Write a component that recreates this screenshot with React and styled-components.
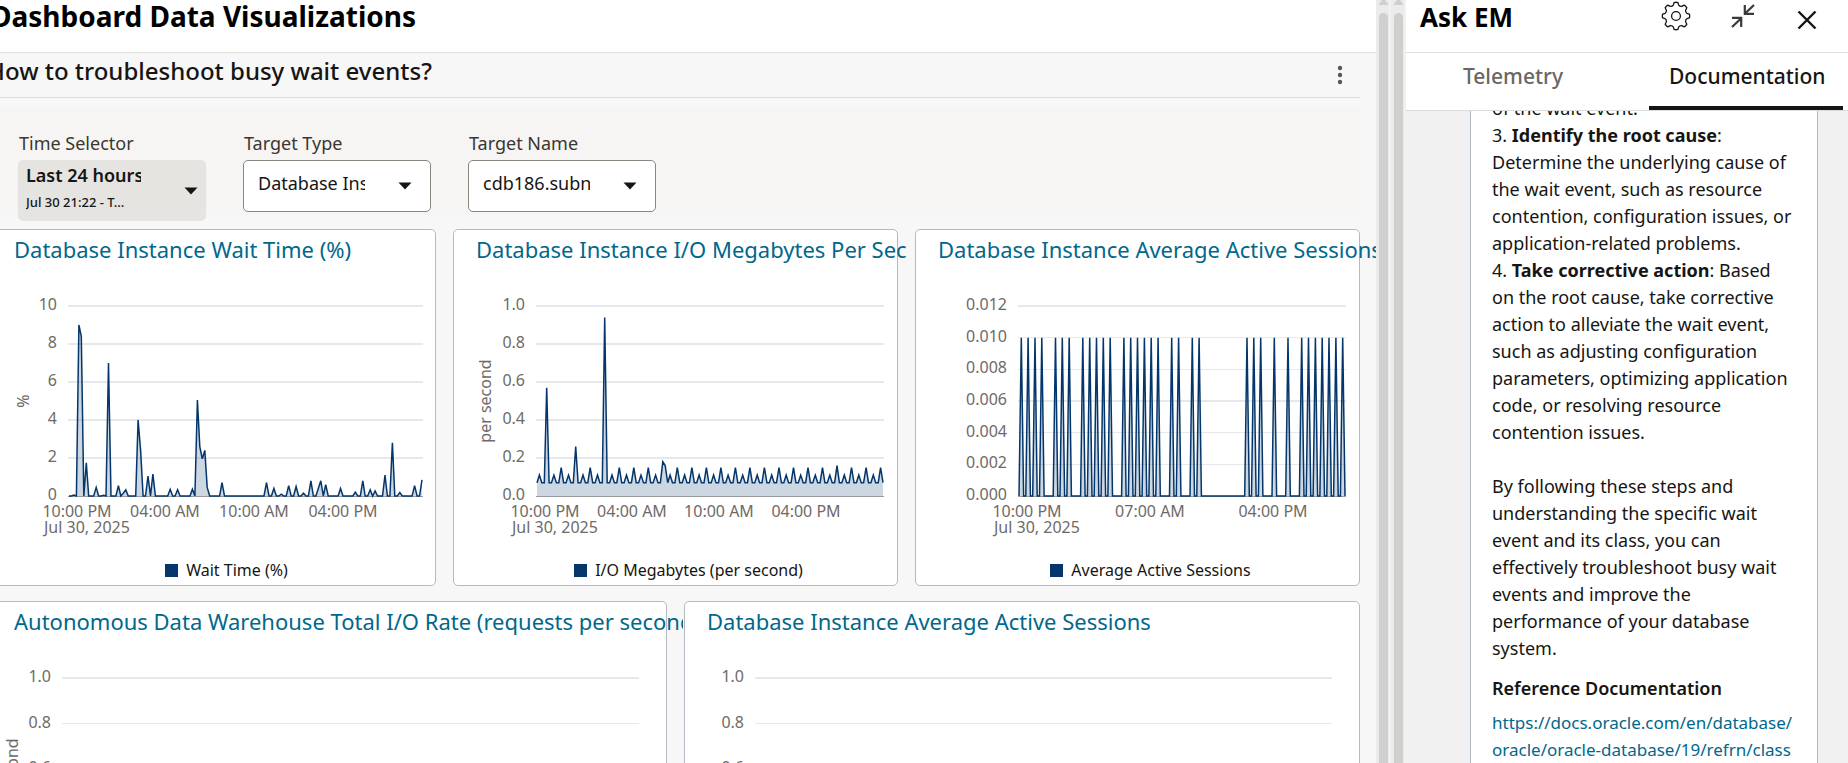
import React from 'react';
import styled, { createGlobalStyle, css } from 'styled-components';

const GlobalStyle = createGlobalStyle`
  *, *::before, *::after { box-sizing: border-box; }
  body {
    margin: 0;
    font-family: "Noto Sans", "Open Sans", sans-serif;
    font-size: 18px;
    line-height: 27px;
    color: #161513;
    overflow: hidden;
  }
  h1, h2, h3, p { margin: 0; }
  button, select { font: inherit; color: inherit; }
`;

/* ---------- page frame ---------- */

const Shell = styled.div`
  display: grid;
  grid-template-columns: minmax(0, 1fr) 30px 442px;
  height: 100vh;
  overflow: hidden;
`;

const Main = styled.main`
  background: #f7f7f7;
  overflow: hidden;
`;

const PageHeader = styled.header`
  height: 53px;
  background: #fff;
  border-bottom: 1px solid #e0e0e0;
  overflow: hidden;
`;

const PageTitle = styled.h1`
  margin-left: -9px;
  font-size: 28px;
  line-height: 32px;
  font-weight: 700;
  color: #000;
  white-space: nowrap;
`;

/* The dashboard is scrolled a little to the right, so its left edge is cut. */
const Dashboard = styled.div`
  margin: 0 16px 0 -9px;
`;

const DashboardHeader = styled.div`
  display: flex;
  align-items: center;
  justify-content: space-between;
  height: 45px;
  margin-left: -4px;
  padding-right: 15px;
  border-bottom: 1px solid #dcdcdc;
`;

const DashboardTitle = styled.h2`
  padding-bottom: 8px;
  font-size: 24px;
  line-height: 32px;
  font-weight: 500;
  white-space: nowrap;
`;

const MenuButton = styled.button`
  display: flex;
  padding: 0;
  border: 0;
  background: none;
`;

/* ---------- filters ---------- */

const FilterBar = styled.div`
  display: flex;
  gap: 37px;
  height: 108px;
  margin: 9px 0 14px;
  padding: 23px 0 0 27px;
  background: #f6f5f3;
`;

const Field = styled.div`
  display: flex;
  flex-direction: column;
  width: 188px;
`;

const FieldLabel = styled.label`
  flex: none;
  height: 30px;
  padding-left: 1px;
  color: #3a3632;
`;

const Control = styled.div`
  position: relative;
  display: flex;
  flex: none;
  svg {
    position: absolute;
    right: ${(p) => (p.$tight ? 8 : 19)}px;
    top: ${(p) => (p.$tight ? 27 : 22)}px;
    pointer-events: none;
  }
`;

const Select = styled.select`
  appearance: none;
  width: 100%;
  height: 52px;
  padding: 0 65px 6px 14px;
  border: 1px solid #8b8580;
  border-radius: 5px;
  background: #fff;
  text-overflow: clip;
`;

const TimeButton = styled.button`
  width: 100%;
  height: 61px;
  padding: 0 65px 4px 8px;
  border: 0;
  border-radius: 5px;
  background: #e5e4e1;
  text-align: left;
`;

const TimeRange = styled.span`
  display: block;
  overflow: hidden;
  white-space: nowrap;
  font-weight: 600;
`;

const TimeDetail = styled.span`
  display: block;
  overflow: hidden;
  white-space: nowrap;
  font-size: 13px;
  font-weight: 500;
`;

/* ---------- chart cards ---------- */

const CardRow = styled.div`
  display: grid;
  grid-template-columns: repeat(${(p) => p.$columns}, minmax(0, 1fr));
  gap: 17px;
  margin-bottom: 15px;
`;

const Card = styled.section`
  height: 357px;
  border: 1px solid #b4bac2;
  border-radius: 5px;
  background: #fff;
`;

const CardTitle = styled.h3`
  height: 49px;
  margin-right: -17px;
  padding: 3px 0 0 22px;
  overflow: hidden;
  font-size: 22px;
  line-height: 32px;
  font-weight: 400;
  color: #00688c;
  white-space: nowrap;
`;

const ChartSvg = styled.svg`
  display: block;
  width: 100%;
  height: auto;
  font-size: 16px;
  fill: #6f6a66;
`;

const Legend = styled.div`
  display: flex;
  align-items: center;
  justify-content: center;
  gap: 8px;
  padding-left: 26px;
  font-size: 16px;
  line-height: 24px;
`;

const Swatch = styled.span`
  width: 13px;
  height: 13px;
  background: #04366b;
`;

/* ---------- scrollbars ---------- */

const Scrollbars = styled.div`
  display: grid;
  grid-template-columns: 1fr 1fr;
  background: #efefef;
`;

const Track = styled.div`
  display: flex;
  flex-direction: column;
  align-items: center;
  gap: 8px;
  padding: 0 3px;
  background: linear-gradient(to right, #ebebeb 13px, #f1f1f1 13px);
`;

const Thumb = styled.div`
  flex: 1;
  width: 9px;
  border-radius: 5px 5px 0 0;
  background: #cfcfcd;
`;

/* ---------- assistant panel ---------- */

const Panel = styled.aside`
  display: flex;
  flex-direction: column;
  min-height: 0;
  background: #f1f1f1;
`;

const PanelHeader = styled.header`
  display: flex;
  justify-content: space-between;
  height: 53px;
  padding: 0 29px 0 14px;
  background: #fff;
  border-bottom: 1px solid #e0e0e0;
`;

const PanelTitle = styled.h2`
  font-size: 26px;
  line-height: 34px;
  font-weight: 700;
  color: #000;
`;

const PanelActions = styled.div`
  display: flex;
  align-items: center;
  gap: 40px;
  height: 32px;
`;

const IconButton = styled.button`
  display: flex;
  padding: ${(p) => (p.$low ? '8px 2px 0' : '0')};
  border: 0;
  background: none;
`;

const Tabs = styled.div`
  display: flex;
  justify-content: flex-end;
  gap: 44px;
  height: 58px;
  padding-right: 5px;
  background: #fff;
  border-bottom: 1px solid #dcdcdc;
`;

const Tab = styled.button`
  padding: 0 20px 7px;
  border: 0;
  border-bottom: 4px solid transparent;
  background: none;
  width: 184px;
  font-size: 21px;
  line-height: 28px;
  font-weight: 500;
  color: #6b6662;
  text-align: center;
  ${(p) =>
    p.$active &&
    css`
      width: 194px;
      color: #161513;
      border-bottom-color: #161513;
    `}
`;

const PanelBody = styled.div`
  flex: 1;
  min-height: 0;
  overflow: hidden;
`;

/* The answer has been scrolled up, so its first line is half hidden. */
const Answer = styled.article`
  margin: -16px 30px 0 64px;
  padding: 0 0 40px 21px;
  border: 1px solid #b4bac2;
  border-width: 0 1px;
  background: #fff;
  white-space: nowrap;
  p { margin-bottom: 27px; }
  a { font-size: 17px; color: #00688c; text-decoration: none; }
`;

const AnswerHeading = styled.h3`
  margin: -14px 0 7px;
  font-size: 18px;
  line-height: 27px;
  font-weight: 600;
`;

/* ---------- data ---------- */

const SAMPLES = 144;

const fromSparse = (points, base = 0) =>
  Array.from({ length: SAMPLES }, (_, i) => points[i] ?? base);

const waitTime = fromSparse({
  2: 0.05, 4: 9, 5: 8.4, 7: 1.75, 11: 0.45, 14: 0.04, 16: 7, 20: 0.55, 22: 0.15, 23: 0.33,
  28: 4, 29: 2.4, 32: 1.05, 34: 1.15, 41: 0.35, 44: 0.33, 50: 0.35, 52: 5.05, 53: 2.6,
  54: 1.95, 55: 2.4, 56: 0.45, 62: 0.7, 80: 0.7, 83: 0.4, 86: 0.1, 89: 0.55, 92: 0.5,
  95: 0.15, 98: 0.8, 101: 0.4, 102: 0.8, 104: 0.6, 110: 0.4, 116: 0.2, 119: 0.8, 122: 0.33,
  124: 0.27, 128: 1.1, 131: 2.8, 134: 0.18, 140: 0.55, 143: 0.85,
});

const ioMegabytes = Array.from({ length: SAMPLES }, (_, i) => {
  const peaks = { 4: 0.57, 16: 0.26, 28: 0.94, 52: 0.18, 53: 0.16, 124: 0.16 };
  if (peaks[i]) return peaks[i];
  if (i % 6 === 1) return 0.11;
  if (i % 6 === 4) return 0.15;
  return 0.07;
});

const sessionPeaks = [
  1, 4, 7, 10, 16, 19, 22, 28, 31, 34, 37, 40, 46, 49, 52, 55, 58, 61, 67, 70, 76, 79,
  100, 103, 106, 112, 118, 124, 127, 130, 133, 136, 139, 142,
];
const activeSessions = fromSparse(Object.fromEntries(sessionPeaks.map((i) => [i, 0.01])));

/* ---------- drawings ---------- */

const TOP = 27;
const LABEL_GAP = 11;

function Chart({ label, width, height, left, right, span, ticks, times = [], dateX, unit, unitX, unitY, values, max }) {
  const step = span / (ticks.length - 1);
  const bottom = TOP + span;
  let line = '';
  let area = '';
  if (values) {
    const x0 = left + 1;
    const dx = (right - 1 - x0) / (values.length - 1);
    line = values
      .map((v, i) => `${(x0 + i * dx).toFixed(1)},${(bottom - (v / max) * span).toFixed(1)}`)
      .join(' ');
    area = `${x0},${bottom} ${line} ${right - 1},${bottom}`;
  }
  return (
    <ChartSvg viewBox={`0 0 ${width} ${height}`} role="img" aria-label={label}>
      {ticks.map((tick, i) => {
        const y = TOP + i * step;
        const whole = Number.isInteger(y);
        const axis = i === ticks.length - 1;
        return (
          <React.Fragment key={tick}>
            {!axis && (
              <line
                x1={left}
                x2={right}
                y1={whole ? y : Math.floor(y) + 0.5}
                y2={whole ? y : Math.floor(y) + 0.5}
                stroke="#e5e8ed"
                strokeWidth={whole ? 2 : 1}
              />
            )}
            <text x={left - LABEL_GAP} y={y + 4} textAnchor="end">{tick}</text>
          </React.Fragment>
        );
      })}
      {values && (
        <>
          <line x1={left} x2={right} y1={bottom + 0.5} y2={bottom + 0.5} stroke="#9a9a9a" />
          <polygon points={area} fill="#04366b" fillOpacity="0.2" />
          <polyline points={line} fill="none" stroke="#04366b" strokeWidth="1.5" />
        </>
      )}
      {times.map(([time, x]) => (
        <text key={time} x={x} y={bottom + 21} textAnchor="middle">{time}</text>
      ))}
      {dateX !== undefined && <text x={dateX} y={bottom + 37}>Jul 30, 2025</text>}
      {unit && (
        <text textAnchor="middle" transform={`translate(${unitX} ${unitY}) rotate(-90)`}>{unit}</text>
      )}
    </ChartSvg>
  );
}

const Caret = () => (
  <svg width="14" height="8" viewBox="0 0 14 8" aria-hidden="true">
    <path d="M0.5 0.5H13.5L7 7.5Z" fill="#161513" />
  </svg>
);

const MoreIcon = () => (
  <svg width="10" height="22" viewBox="0 0 10 22" aria-hidden="true">
    <g fill="#5b5652">
      <circle cx="5" cy="4" r="2.2" />
      <circle cx="5" cy="11" r="2.2" />
      <circle cx="5" cy="18" r="2.2" />
    </g>
  </svg>
);

const gearOutline = (() => {
  const point = (radius, degrees) => {
    const a = (degrees * Math.PI) / 180;
    return `${(15 + radius * Math.sin(a)).toFixed(2)} ${(15 - radius * Math.cos(a)).toFixed(2)}`;
  };
  let d = '';
  for (let k = 0; k < 8; k += 1) {
    const c = k * 45;
    d += `${k ? 'L' : 'M'}${point(11.2, c - 14)} L${point(13.6, c - 8)} `;
    d += `Q${point(14, c)} ${point(13.6, c + 8)} L${point(11.2, c + 14)} `;
    d += `Q${point(10, c + 22.5)} ${point(11.2, c + 31)} `;
  }
  return `${d}Z`;
})();

const GearIcon = () => (
  <svg width="30" height="30" viewBox="0 0 30 30" fill="none" stroke="#161513" strokeWidth="1.3" strokeLinejoin="round" aria-hidden="true">
    <path d={gearOutline} />
    <circle cx="15" cy="15" r="4.4" />
  </svg>
);

const CollapseIcon = () => (
  <svg width="24" height="24" viewBox="0 0 24 24" fill="none" stroke="#3d3936" strokeWidth="2.2" aria-hidden="true">
    <path d="M23 1L14 9.5M13.8 1V9.8H23M1 23L10 14.5M1 13.8H10.2V23" />
  </svg>
);

const CloseIcon = () => (
  <svg width="20" height="20" viewBox="0 0 20 20" fill="none" stroke="#161513" strokeWidth="2.4" aria-hidden="true">
    <path d="M1.5 1.5L18.5 18.5M18.5 1.5L1.5 18.5" />
  </svg>
);

const ScrollArrow = () => (
  <svg width="9" height="5" viewBox="0 0 9 5" aria-hidden="true">
    <path d="M3 0H6L9 4V5H0V4Z" fill="#cfcfcd" />
  </svg>
);

const Scrollbar = () => (
  <Track>
    <ScrollArrow />
    <Thumb />
  </Track>
);

function ChartCard({ title, legend, ...chart }) {
  return (
    <Card>
      <CardTitle>{title}</CardTitle>
      <Chart label={title} {...chart} />
      {legend && (
        <Legend>
          <Swatch />
          {legend}
        </Legend>
      )}
    </Card>
  );
}

const smallChart = { width: 443, height: 279, span: 190 };
const largeChart = {
  width: 674,
  height: 330,
  span: 228,
  left: 70,
  right: 647,
  ticks: ['1.0', '0.8', '0.6', '0.4', '0.2', '0.0'],
};

export default function App() {
  return (
    <>
      <GlobalStyle />
      <Shell>
        <Main>
          <PageHeader>
            <PageTitle>Dashboard Data Visualizations</PageTitle>
          </PageHeader>
          <Dashboard>
            <DashboardHeader>
              <DashboardTitle>How to troubleshoot busy wait events?</DashboardTitle>
              <MenuButton type="button" aria-label="More actions"><MoreIcon /></MenuButton>
            </DashboardHeader>
            <FilterBar>
              <Field>
                <FieldLabel htmlFor="time">Time Selector</FieldLabel>
                <Control $tight>
                  <TimeButton id="time" type="button">
                    <TimeRange>Last 24 hours</TimeRange>
                    <TimeDetail>Jul 30 21:22 - T…</TimeDetail>
                  </TimeButton>
                  <Caret />
                </Control>
              </Field>
              <Field>
                <FieldLabel htmlFor="type">Target Type</FieldLabel>
                <Control>
                  <Select id="type"><option>Database Ins</option></Select>
                  <Caret />
                </Control>
              </Field>
              <Field>
                <FieldLabel htmlFor="name">Target Name</FieldLabel>
                <Control>
                  <Select id="name"><option>cdb186.subn</option></Select>
                  <Caret />
                </Control>
              </Field>
            </FilterBar>
            <CardRow $columns={3}>
              <ChartCard
                {...smallChart}
                title="Database Instance Wait Time (%)"
                legend="Wait Time (%)"
                left={76}
                right={431}
                ticks={['10', '8', '6', '4', '2', '0']}
                times={[['10:00 PM', 85], ['04:00 AM', 173], ['10:00 AM', 262], ['04:00 PM', 351]]}
                dateX={52}
                unit="%"
                unitX={37}
                unitY={122}
                values={waitTime}
                max={10}
              />
              <ChartCard
                {...smallChart}
                title="Database Instance I/O Megabytes Per Sec"
                legend="I/O Megabytes (per second)"
                left={82}
                right={430}
                ticks={['1.0', '0.8', '0.6', '0.4', '0.2', '0.0']}
                times={[['10:00 PM', 91], ['04:00 AM', 178], ['10:00 AM', 265], ['04:00 PM', 352]]}
                dateX={58}
                unit="per second"
                unitX={37}
                unitY={122}
                values={ioMegabytes}
                max={1}
              />
              <ChartCard
                {...smallChart}
                title="Database Instance Average Active Sessions"
                legend="Average Active Sessions"
                left={102}
                right={430}
                ticks={['0.012', '0.010', '0.008', '0.006', '0.004', '0.002', '0.000']}
                times={[['10:00 PM', 111], ['07:00 AM', 234], ['04:00 PM', 357]]}
                dateX={78}
                values={activeSessions}
                max={0.012}
              />
            </CardRow>
            <CardRow $columns={2}>
              <ChartCard
                {...largeChart}
                title="Autonomous Data Warehouse Total I/O Rate (requests per second)"
                unit="per second"
                unitX={26}
                unitY={129}
              />
              <ChartCard {...largeChart} title="Database Instance Average Active Sessions" />
            </CardRow>
          </Dashboard>
        </Main>

        <Scrollbars aria-hidden="true">
          <Scrollbar />
          <Scrollbar />
        </Scrollbars>

        <Panel>
          <PanelHeader>
            <PanelTitle>Ask EM</PanelTitle>
            <PanelActions>
              <IconButton type="button" aria-label="Settings"><GearIcon /></IconButton>
              <IconButton type="button" aria-label="Collapse"><CollapseIcon /></IconButton>
              <IconButton type="button" aria-label="Close" $low><CloseIcon /></IconButton>
            </PanelActions>
          </PanelHeader>
          <Tabs role="tablist">
            <Tab type="button" role="tab" aria-selected="false">Telemetry</Tab>
            <Tab type="button" role="tab" aria-selected="true" $active>Documentation</Tab>
          </Tabs>
          <PanelBody>
            <Answer>
              <p>
                of the wait event.<br />
                3. <b>Identify the root cause</b>:<br />
                Determine the underlying cause of<br />
                the wait event, such as resource<br />
                contention, configuration issues, or<br />
                application-related problems.<br />
                4. <b>Take corrective action</b>: Based<br />
                on the root cause, take corrective<br />
                action to alleviate the wait event,<br />
                such as adjusting configuration<br />
                parameters, optimizing application<br />
                code, or resolving resource<br />
                contention issues.
              </p>
              <p>
                By following these steps and<br />
                understanding the specific wait<br />
                event and its class, you can<br />
                effectively troubleshoot busy wait<br />
                events and improve the<br />
                performance of your database<br />
                system.
              </p>
              <AnswerHeading>Reference Documentation</AnswerHeading>
              <a href="https://docs.oracle.com/en/database/oracle/oracle-database/19/refrn/class">
                https://docs.oracle.com/en/database/<br />
                oracle/oracle-database/19/refrn/class
              </a>
            </Answer>
          </PanelBody>
        </Panel>
      </Shell>
    </>
  );
}
